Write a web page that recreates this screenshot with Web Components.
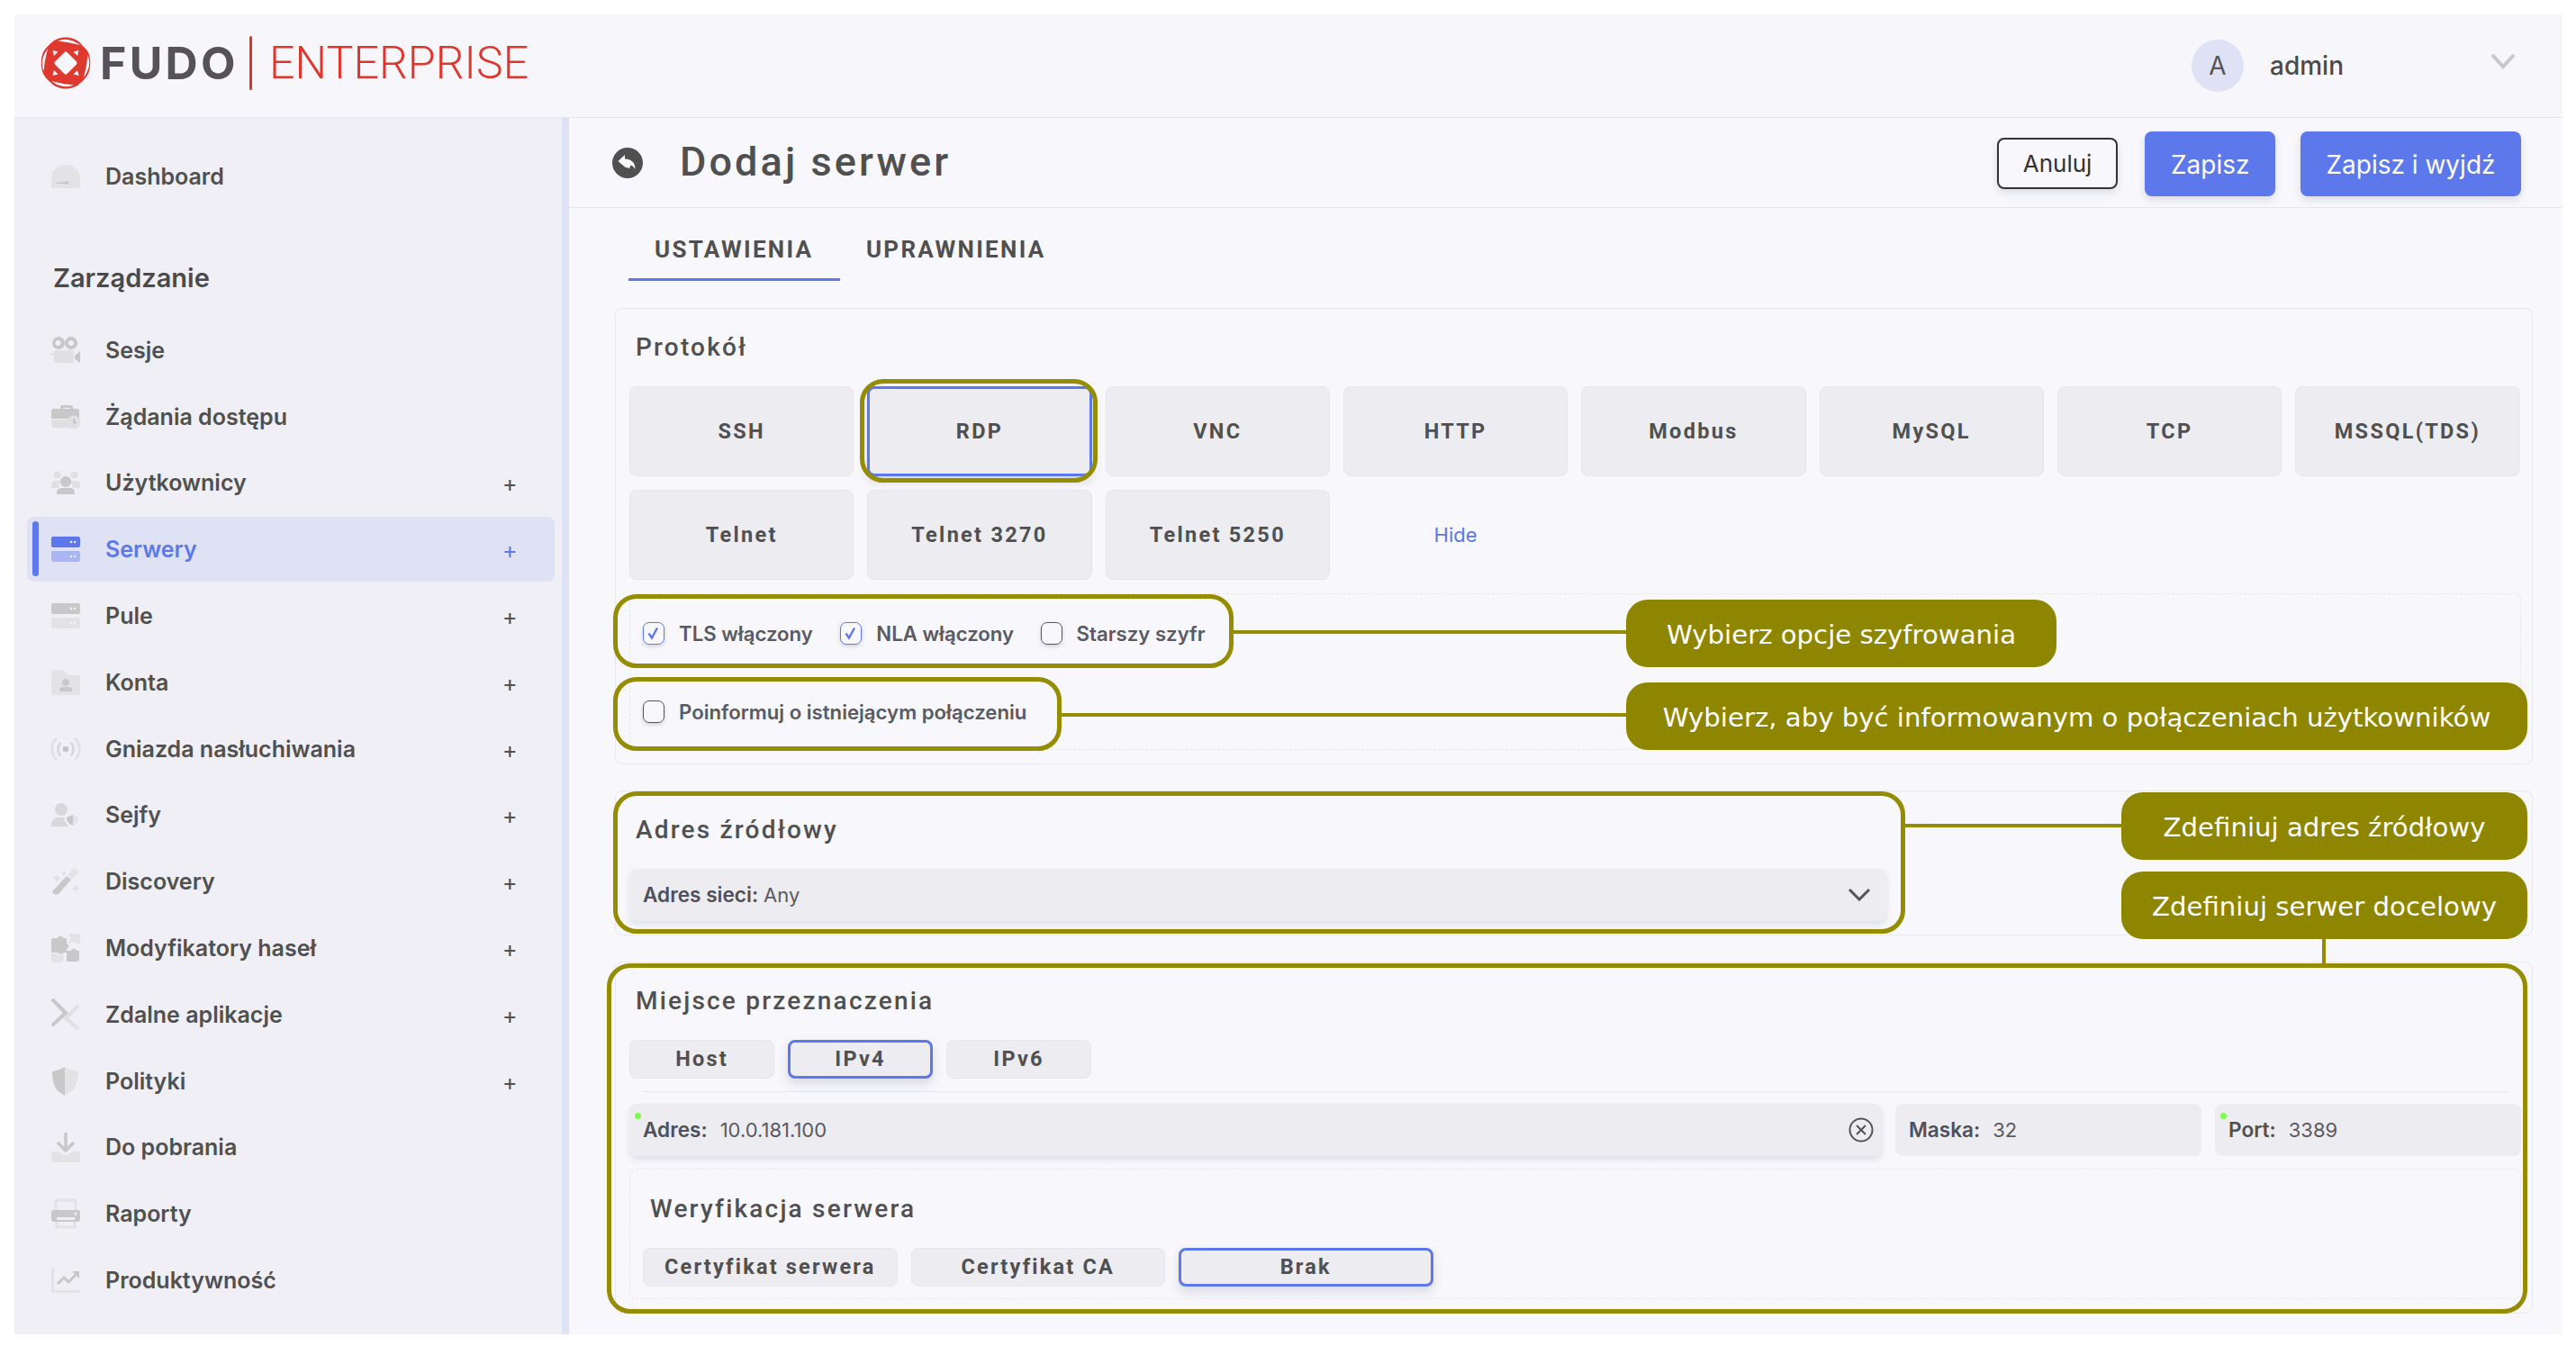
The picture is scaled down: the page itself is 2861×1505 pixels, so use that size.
<!DOCTYPE html>
<html lang="pl"><head><meta charset="utf-8"><title>Fudo</title>
<style>
html,body{margin:0;padding:0;background:#fff}
body{font-family:Inter,"Liberation Sans",sans-serif;color:#505050}
</style></head><body>
<fudo-app></fudo-app>
<script>
const I={
dashboard:`<path fill="#e3e3e6" d="M0 26V14C1 5 8 0 16 0s15 5 16 14v12z"/><path fill="#c8c8c8" d="M5 20l10-1c1-1 3-1 4 0 1 2 0 3-2 3-1 0-2 0-2-1l-10 0z"/>`,
sesje:`<circle cx="8" cy="7" r="7" fill="#c8c8c8"/><circle cx="22" cy="7" r="7" fill="#c8c8c8"/><circle cx="7.500" cy="7" r="3" fill="#efeff5"/><circle cx="22" cy="7" r="3" fill="#efeff5"/><rect x="3" y="15" width="22" height="14" rx="2" fill="#e0e0e3"/><rect x="0" y="18" width="4" height="3" fill="#e0e0e3"/><path fill="#c8c8c8" d="M26 21l6-5v13l-6-4z"/>`,
zadania:`<path fill="#c8c8c8" d="M10 4V2c0-1 1-2 2-2h10c1 0 2 1 2 2v2h4c2 0 3 1 3 3v8H0V7c0-2 1-3 3-3zm3-1v1h8V3z"/><path fill="#e0e0e3" d="M0 16h20c-1 3 0 6 1 9H3c-2 0-3-1-3-3z"/><circle cx="25" cy="19" r="7.500" fill="#e0e0e3"/><path stroke="#aaa" fill="none" stroke-width="1" d="M25 15v4.500h3"/>`,
users:`<circle cx="6.500" cy="4.500" r="4" fill="#e0e0e3"/><circle cx="25.500" cy="4.500" r="4" fill="#e0e0e3"/><path fill="#e0e0e3" d="M0 19v-4c0-2 2-4 4-4h6c1 0 1 1 0 2-1 2-2 4-2 6zM32 19v-4c0-2-2-4-4-4h-6c-1 0-1 1 0 2 1 2 2 4 2 6z"/><circle cx="16" cy="12" r="6" fill="#c8c8c8"/><path fill="#c8c8c8" d="M6 26v-2c0-3 3-5 5-5h10c2 0 5 2 5 5v2z"/>`,
folder:`<path fill="#e3e3e6" d="M0 3c0-2 1-3 3-3h10l6 6h10c2 0 3 1 3 3v16c0 2-1 3-3 3H3c-2 0-3-1-3-3z"/><circle cx="16" cy="14" r="4" fill="#c8c8c8"/><path fill="#c8c8c8" d="M9 24v-2c0-2 2-3 3-3h8c1 0 3 1 3 3v2z"/>`,
cast:`<path fill="none" stroke="#e0e0e4" stroke-width="2.600" d="M6 2C-1 8-1 20 6 26M26 2c7 6 7 18 0 24"/><path fill="none" stroke="#d8d8dc" stroke-width="2.600" d="M10.500 6.500C6.500 10 6.500 18 10.500 21.500M21.500 6.500c4 3.500 4 11.500 0 15"/><circle cx="16" cy="14" r="3.200" fill="#c4c4c6"/>`,
vault:`<circle cx="11" cy="7" r="7" fill="#d8d8dc"/><path fill="#d8d8dc" d="M0 26v-3c0-4 4-7 8-7h8c2 0 3 1 3 2v8z"/><path fill="#efeff5" d="M23 10l-9 4c0 5 2 10 9 13 7-3 9-8 9-13z"/><path fill="#c8c8c8" d="M24 13l-7 3c0 4 2 7 7 9z"/><path fill="#e3e3e6" d="M24 13l6 3c0 4-2 7-6 9z"/>`,
wand:`<path fill="#c8c8c8" d="M3 29c-2-1-2-3-1-4L17 9l5 4L8 29c-1 1-3 1-5 0z"/><path fill="#e3e3e6" d="M18 7l6-6c1-1 2-1 3 0l3 2c1 1 1 2 0 3l-7 6z"/><path fill="#e0e0e3" d="M6 7l1.500 3 3 1.500-3 1.500L6 16l-1.500-3-3-1.500 3-1.500zM27 18l1.500 3 3 1.500-3 1.500-1.500 3-1.500-3-3-1.500 3-1.500zM14 3l1 2 2 1-2 1-1 2-1-2-2-1 2-1z"/>`,
puzzle:`<path fill="#c8c8c8" d="M2 5h5c0-3 6-3 6 0h4v6c3 0 3 6 0 6v4h-4c0 2-6 2-6 0H0V7c0-1 1-2 2-2z"/><path fill="#e3e3e6" d="M20 0h10c1 0 2 1 2 2v9h-5c0-3-6-3-6 0h-2v-3c3 0 3-6 0-6V1zM0 22h6c0 3 6 3 6 0h2v6c0 2-1 4-3 4H2c-1 0-2-1-2-2z"/><path fill="#c8c8c8" d="M17 19h5c0-3 6-3 6 0h3v9c0 2-1 3-3 3H17z"/>`,
chevx:`<path fill="none" stroke="#c8c8c8" stroke-width="4" stroke-linecap="round" d="M2 2l14 14L2 29"/><path fill="none" stroke="#e0e0e3" stroke-width="4" stroke-linecap="round" d="M29 9L16 22l13 11"/>`,
shield:`<path fill="#c8c8c8" d="M15 0C10 3 6 4 1 5c0 12 2 21 14 27z"/><path fill="#e3e3e6" d="M15 0c5 3 9 4 15 5 0 12-3 21-15 27z"/>`,
dl:`<path stroke="#c8c8c8" stroke-width="3.500" fill="none" d="M16 0v18"/><path stroke="#c8c8c8" stroke-width="3.500" fill="none" d="M7 11l9 9 9-9"/><path fill="#e3e3e6" d="M0 24c0-2 1-3 3-3h5l8 5 8-5h5c2 0 3 1 3 3v6c0 2-1 3-3 3H3c-2 0-3-1-3-3z"/>`,
printer:`<path fill="none" stroke="#e3e3e6" stroke-width="3" d="M5 12V3c0-1 1-2 2-2h18c1 0 2 1 2 2v9M6 22v9h20v-9"/><rect y="12" width="32" height="13" rx="3" fill="#c8c8c8"/><rect x="6" y="20" width="20" height="3" fill="#efeff5"/><circle cx="27" cy="16" r="1.500" fill="#efeff5"/>`,
chart:`<path fill="#e3e3e6" d="M0 0h3v25h29v3H2c-1 0-2-1-2-2z"/><path fill="none" stroke="#c8c8c8" stroke-width="3" d="M7 18l7-7 5 5 9-9"/><path fill="#c8c8c8" d="M23 4h8v8z"/>`
};
const srv=(a,b,d)=>`<rect y="0" width="32" height="12" rx="2" fill="${a}"/><rect y="16" width="32" height="12" rx="2" fill="${b}"/><circle cx="22" cy="6" r="1.300" fill="${d}"/><circle cx="26" cy="6" r="1.300" fill="${d}"/><circle cx="22" cy="22" r="1.300" fill="${d}"/><circle cx="26" cy="22" r="1.300" fill="${d}"/>`;
I.srvOn=srv('#5d78ea','#a9b6f3','#efeff9');
I.srvOff=srv('#c8c8c8','#e3e3e6','#f4f4f4');

const OLIVE='#8f8600';
function def(name,css,html,extra){
  customElements.define(name,class extends HTMLElement{
    constructor(){super();this.attachShadow({mode:'open'});}
    connectedCallback(){this.shadowRoot.innerHTML=`<style>${css}</style>`+(typeof html==='function'?html(this):html);if(extra)extra(this);}
  });
}
customElements.define('nav-item',class extends HTMLElement{
  connectedCallback(){
    const on=this.hasAttribute('active'),plus=this.hasAttribute('plus');
    const ic=I[this.getAttribute('icon')];const h=this.getAttribute('ih')||28;
    const r=this.attachShadow({mode:'open'});
    r.innerHTML=`<style>
    :host{display:flex;align-items:center;height:72px;margin:0 8px 1.800px 14px;border-radius:8px;position:relative;font:600 25px Inter,sans-serif;color:${on?'#5d78ea':'#505050'};background:${on?'#dfe2f5':'transparent'}}
    svg{width:32px;height:${h}px;margin-left:27px;flex:none;overflow:visible}
    .t{margin-left:28px;flex:1}
    .p{margin-right:44px;font-size:25px;font-weight:400;width:14px;text-align:center;position:relative;top:1px}
    .bar{position:absolute;left:6px;top:5px;bottom:6px;width:7px;border-radius:4px;background:#5d78ea}
    </style>${on?'<i class="bar"></i>':''}<svg viewBox="0 0 32 ${h}">${ic}</svg><span class="t"><slot></slot></span>${plus?'<span class="p">+</span>':''}`;
  }
});
const sliver='<path d="M20 4.500Q32 -.5 45 9Q32 5.500 20 4.500z"/>';
def('fudo-logo',`:host{display:flex;align-items:center;height:100%;margin-left:28px;padding-bottom:6px;box-sizing:border-box}
 svg{width:58px;height:58px;flex:none}
 .f{font:700 50px Inter,sans-serif;color:#57525a;margin-left:9px;letter-spacing:3.300px;display:inline-block;width:146px;line-height:1;white-space:nowrap}
 .s{width:3px;height:60px;background:#e0352b;margin:0 19px 0 20px;flex:none;border-radius:2px}
 .e{font:300 50px Roboto,sans-serif;color:#e0352b;line-height:1;letter-spacing:.1px}`,
 `<svg viewBox="0 0 58 58"><path fill="#df382e" d="M29 .5C36 .5 41 3 45 6.500 47 10 52 13 54 17 57 24 57 34 54 41 52 45 48 49 45 51.500 41 55 36 57.500 29 57.500 22 57.500 17 55 13 51.500 10 49 6 45 4 41 1 34 1 24 4 17 6 13 10 9 13 6.500 17 3 22 .5 29 .5z"/>
 <g fill="#f6f6fb">${[0,90,180,270].map(a=>`<g transform="rotate(${a} 29 29)">${sliver}</g>`).join('')}
 <path d="M27.500 17q1.500-1.300 3 0l10.500 10.500q1.300 1.500 0 3L30.500 41q-1.500 1.300-3 0L17 30.500q-1.300-1.500 0-3z"/>
 <path d="M14.500 15l6 1.500-4.500 4.500z"/><path d="M43.500 15l-1.500 6-4.500-4.500z"/><path d="M43.500 43l-6-1.500 4.500-4.500z"/><path d="M14.500 43l1.500-6 4.500 4.500z"/></g></svg>
 <span class="f">FUDO</span><i class="s"></i><span class="e">ENTERPRISE</span>`);
def('fudo-user',`:host{display:flex;align-items:center;height:100%;margin-left:auto}
 .a{width:58px;height:58px;border-radius:50%;background:#dfe2f5;display:flex;align-items:center;justify-content:center;font:400 28px Inter,sans-serif;color:#555}
 .n{font:500 28px Inter,sans-serif;color:#4a4a4a;margin-left:29px;width:245px}
 svg{width:28px;height:18px;margin:0 52px 11px 0;display:block}`,
 `<div class="a">A</div><div class="n">admin</div><svg viewBox="0 0 28 18"><path d="M2 2l12 13L26 2" fill="none" stroke="#c8c8c8" stroke-width="4"/></svg>`);
def('fudo-header',`:host{display:flex;height:114px;background:#f6f6fb;border-bottom:1.500px solid #e6e6ee;align-items:stretch}`,`<slot></slot>`);
def('fudo-sidebar',`:host{display:block;width:608px;flex:none;background:#efeff5;border-right:8px solid #dfe2f5;padding-top:28.500px}
 h2{font:600 29px Inter,sans-serif;color:#4a4a4a;margin:0;line-height:50px;padding:51px 0 0 43px;height:68.500px;box-sizing:content-box}`,
 ()=>`<slot name="top"></slot><h2>Zarządzanie</h2><slot></slot>`);
def('fudo-btn',`:host{display:inline-flex;align-items:center;justify-content:center;box-sizing:border-box;border-radius:8px;font:400 28px Inter,sans-serif;height:72px;padding:2px 28.500px 0;background:#5d78ea;color:#fff;box-shadow:0 4px 8px rgba(60,60,90,.14);margin-left:28px}
 :host([ghost]){background:transparent;color:#333;border:2px solid #333;height:57px;font-size:26px;margin-left:0;padding:0 27px;border-radius:8px}`,`<slot></slot>`);
def('fudo-titlebar',`:host{display:flex;align-items:center;height:99px;border-bottom:1.500px solid #e6e6ee;padding:0 46px 0 48px}
 svg{width:34px;height:34px;flex:none}
 h1{font:500 45px Roboto,sans-serif;letter-spacing:3.100px;color:#505050;margin:0 0 3px 41px;flex:1}
 .b{display:flex;align-items:center;margin-top:2px}`,
 `<svg viewBox="0 0 34 34"><circle cx="17" cy="17" r="17" fill="#505050"/><path fill="#fff" d="M6.500 15L14 8v4.500c7 0 11.500 4 11.500 11.500-1.500-2.500-3-4-5-4.500L19 23l-5-1.500z"/></svg><h1><slot></slot></h1><div class="b"><slot name="b"></slot></div>`);
def('fudo-tabs',`:host{display:flex;height:81px;margin-left:66px;box-sizing:border-box}
 div{font:700 26px Roboto,sans-serif;letter-spacing:2.300px;color:#505050;padding:13px 29.500px 0 29px;display:flex;align-items:center;box-sizing:border-box;height:81px;border-bottom:3px solid transparent}
 .on{border-bottom-color:#5d78ea}`,
 `<div class="on">USTAWIENIA</div><div>UPRAWNIENIA</div>`);
def('fudo-card',`:host{display:block;border:1.500px solid #e8e8f0;border-radius:8px;padding:0 12px 15px 15px;margin:0 33px 29px 51px;box-sizing:border-box}
 h3{font:500 28px Roboto,sans-serif;letter-spacing:2.200px;color:#505050;margin:0;height:86px;line-height:86px;padding-left:7px}`,
 e=>`<h3>${e.getAttribute('title')}</h3><slot></slot>`);
def('opt-btn',`:host{display:flex;align-items:center;justify-content:center;box-sizing:border-box;background:#ececf1;border:1.500px solid #e6e6ec;border-radius:8px;font:700 23.500px Roboto,sans-serif;letter-spacing:2.300px;color:#505050;height:100px}
 :host([small]){height:43px;letter-spacing:2.200px}
 :host([on]){border:3px solid #5d78ea;box-shadow:0 6px 12px rgba(60,60,90,.16)}
 :host([link]){background:none;border:0;color:#5d78ea;font:400 22px Inter,sans-serif;letter-spacing:0}`,`<slot></slot>`);
def('proto-grid',`:host{display:grid;grid-template-columns:repeat(8,1fr);gap:15px;margin-right:1.500px}`,`<slot></slot>`);
def('dash-box',`:host{display:block;border:1.500px dashed #e6e6ec;border-radius:8px;box-sizing:border-box}`,`<slot></slot>`);
def('chk-row',`:host{display:flex;align-items:center;padding-left:14px;gap:0}`,`<slot></slot>`);
customElements.define('fudo-check',class extends HTMLElement{connectedCallback(){
 const on=this.hasAttribute('on');const r=this.attachShadow({mode:'open'});
 r.innerHTML=`<style>:host{display:flex;align-items:center;font:600 22.200px Inter,sans-serif;color:#5a5a62}
 i{display:block;width:24px;height:25px;box-sizing:border-box;border:1.500px solid ${on?'#5d78ea':'#555'};border-radius:7px;margin-right:16px;box-shadow:0 2px 4px rgba(60,60,90,.2);flex:none}
 svg{display:block;width:21px;height:22px}</style><i>${on?'<svg viewBox="0 0 21 22"><path d="M5.500 11.500l3.500 5 6-11" fill="none" stroke="#5d78ea" stroke-width="2.400"/></svg>':''}</i><span><slot></slot></span>`;
}});
customElements.define('fudo-field',class extends HTMLElement{connectedCallback(){
 const r=this.attachShadow({mode:'open'});const dot=this.hasAttribute('dot');const sh=this.hasAttribute('shadow');
 r.innerHTML=`<style>:host{display:flex;align-items:center;height:58px;box-sizing:border-box;background:#ececf1;border-radius:8px;padding:0 15px;font:400 22px Inter,sans-serif;color:#5a5a62;position:relative;${sh?'box-shadow:0 4px 7px rgba(60,60,90,.12);':''}}
 b{font-weight:600;font-size:22.600px;margin-right:${this.getAttribute('gap')||14}px;color:#505058}
 .d{position:absolute;left:6px;top:10px;width:7px;height:7px;border-radius:50%;background:#7cfc4a}
 .v{flex:1}
 svg{flex:none;display:block}</style>${dot?'<i class="d"></i>':''}<b>${this.getAttribute('label')}</b><span class="v"><slot></slot></span><slot name="icon"></slot>`;
}});
def('fudo-mark',`:host{position:absolute;box-sizing:border-box;border:5px solid #958c00;border-radius:26px;pointer-events:none}`,``);
def('fudo-link',`:host{position:absolute;background:#958c00;pointer-events:none}`,``);
def('fudo-callout',`:host{position:absolute;box-sizing:border-box;background:${OLIVE};color:#fff;border-radius:24px;display:flex;align-items:center;justify-content:center;font:400 29.200px "DejaVu Sans",sans-serif;white-space:nowrap;padding-top:3px}`,`<slot></slot>`);
def('fudo-main',`:host{display:block;flex:1;background:#f7f7fc;min-width:0}`,`<slot></slot>`);

const pos=(l,t,w,h)=>`style="left:${l}px;top:${t}px;width:${w}px;height:${h}px"`;
def('fudo-app',`:host{display:block;padding:16px 15px 23px 16px;position:relative;height:1466px}
 .shell{display:flex;flex-direction:column;height:100%}
 .body{display:flex;flex:1;min-height:0}
 .row{display:flex;gap:15px}
 .inp{display:grid;grid-template-columns:1fr 340px 340px;gap:15px;margin-top:13px}
 hr{border:0;border-top:1.500px solid #e6e6ee;margin:14px 14px 0 14px}
 .sm{width:161px}
 .sm2{width:282.500px}
 svg{display:block}
 `,
 `<div class="shell">
 <fudo-header><fudo-logo></fudo-logo><fudo-user></fudo-user></fudo-header>
 <div class="body">
 <fudo-sidebar>
  <nav-item slot="top" icon="dashboard" ih="26">Dashboard</nav-item>
  <nav-item icon="sesje" ih="29">Sesje</nav-item>
  <nav-item icon="zadania" ih="26">Żądania dostępu</nav-item>
  <nav-item icon="users" ih="26" plus>Użytkownicy</nav-item>
  <nav-item icon="srvOn" active plus>Serwery</nav-item>
  <nav-item icon="srvOff" plus>Pule</nav-item>
  <nav-item icon="folder" plus>Konta</nav-item>
  <nav-item icon="cast" plus>Gniazda nasłuchiwania</nav-item>
  <nav-item icon="vault" ih="27" plus>Sejfy</nav-item>
  <nav-item icon="wand" ih="30" plus>Discovery</nav-item>
  <nav-item icon="puzzle" ih="32" plus>Modyfikatory haseł</nav-item>
  <nav-item icon="chevx" ih="35" plus>Zdalne aplikacje</nav-item>
  <nav-item icon="shield" ih="32" plus>Polityki</nav-item>
  <nav-item icon="dl" ih="33">Do pobrania</nav-item>
  <nav-item icon="printer" ih="32">Raporty</nav-item>
  <nav-item icon="chart" ih="28">Produktywność</nav-item>
 </fudo-sidebar>
 <fudo-main>
  <fudo-titlebar>Dodaj serwer<fudo-btn slot="b" ghost>Anuluj</fudo-btn><fudo-btn slot="b" style="margin-left:30px">Zapisz</fudo-btn><fudo-btn slot="b">Zapisz i wyjdź</fudo-btn></fudo-titlebar>
  <fudo-tabs></fudo-tabs>
  <div style="height:29.500px"></div>
  <fudo-card title="Protokół">
   <proto-grid>
    <opt-btn>SSH</opt-btn><opt-btn on>RDP</opt-btn><opt-btn>VNC</opt-btn><opt-btn>HTTP</opt-btn><opt-btn>Modbus</opt-btn><opt-btn>MySQL</opt-btn><opt-btn>TCP</opt-btn><opt-btn>MSSQL(TDS)</opt-btn>
    <opt-btn>Telnet</opt-btn><opt-btn>Telnet 3270</opt-btn><opt-btn>Telnet 5250</opt-btn><opt-btn link>Hide</opt-btn>
   </proto-grid>
   <dash-box style="margin-top:15px;height:174px;padding-top:30px">
    <chk-row><fudo-check on style="margin-right:30.500px">TLS włączony</fudo-check><fudo-check on style="margin-right:29.500px">NLA włączony</fudo-check><fudo-check>Starszy szyfr</fudo-check></chk-row>
    <chk-row style="margin-top:60px"><fudo-check>Poinformuj o istniejącym połączeniu</fudo-check></chk-row>
   </dash-box>
  </fudo-card>
  <fudo-card title="Adres źródłowy">
   <fudo-field label="Adres sieci:" gap="6" shadow style="width:1396px">Any<svg slot="icon" width="26" height="15" viewBox="0 0 26 15" style="margin-right:2px"><path d="M2 2l11 11L24 2" fill="none" stroke="#555" stroke-width="3"/></svg></fudo-field>
  </fudo-card>
  <fudo-card title="Miejsce przeznaczenia" style="margin-bottom:0">
   <div class="row"><opt-btn small class="sm">Host</opt-btn><opt-btn small on class="sm">IPv4</opt-btn><opt-btn small class="sm">IPv6</opt-btn></div>
   <hr>
   <div class="inp">
    <fudo-field label="Adres:" dot shadow>10.0.181.100<svg slot="icon" width="28" height="28" viewBox="0 0 28 28" style="margin-right:-6px"><circle cx="14" cy="14" r="12.500" fill="none" stroke="#555" stroke-width="2"/><path d="M9 9l10 10M19 9L9 19" stroke="#555" stroke-width="2"/></svg></fudo-field>
    <fudo-field label="Maska:">32</fudo-field>
    <fudo-field label="Port:" dot>3389</fudo-field>
   </div>
   <dash-box style="margin-top:14px;height:145px;padding:0 14px">
    <div style="font:500 28px Roboto,sans-serif;letter-spacing:2.200px;color:#505050;padding-left:8px;height:87px;line-height:87px">Weryfikacja serwera</div>
    <div class="row"><opt-btn small class="sm2">Certyfikat serwera</opt-btn><opt-btn small class="sm2">Certyfikat CA</opt-btn><opt-btn small on class="sm2">Brak</opt-btn></div>
   </dash-box>
  </fudo-card>
 </fudo-main>
 </div></div>
 <fudo-mark ${pos(955,421,264,115)}></fudo-mark>
 <fudo-mark ${pos(681,660,689,82)}></fudo-mark>
 <fudo-mark ${pos(681,752,498,82)}></fudo-mark>
 <fudo-mark ${pos(681,879,1435,158)}></fudo-mark>
 <fudo-mark ${pos(674,1070,2133,389)}></fudo-mark>
 <fudo-link ${pos(1369,700,437,4)}></fudo-link>
 <fudo-link ${pos(1178,792,628,4)}></fudo-link>
 <fudo-link ${pos(2115,915,241,4)}></fudo-link>
 <fudo-link ${pos(2579,1043,4,28)}></fudo-link>
 <fudo-callout ${pos(1806,666,478,75)}>Wybierz opcje szyfrowania</fudo-callout>
 <fudo-callout ${pos(1806,758,1001,75)}>Wybierz, aby być informowanym o połączeniach użytkowników</fudo-callout>
 <fudo-callout ${pos(2356,880,451,75)}>Zdefiniuj adres źródłowy</fudo-callout>
 <fudo-callout ${pos(2356,968,451,75)}>Zdefiniuj serwer docelowy</fudo-callout>`);
</script>
</body></html>
